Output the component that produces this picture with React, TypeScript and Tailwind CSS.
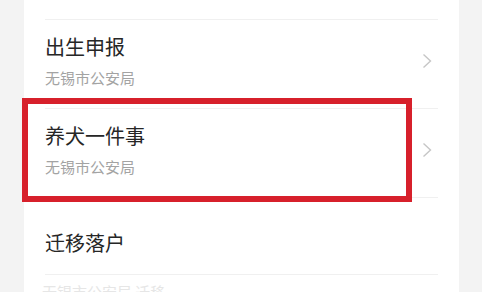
import { Fragment } from 'react'

const FONT = { fontFamily: '"Noto Sans CJK SC", "Noto Sans", sans-serif' }

function Chevron() {
  return (
    <svg width="10" height="16" viewBox="0 0 10 16" className="mb-[6px] shrink-0">
      <polyline points="1.5,1.5 8.5,8 1.5,14.5" fill="none" stroke="#c6c6c6" strokeWidth="1.4" />
    </svg>
  )
}

function Divider() {
  return <div className="mx-[21px] h-px bg-[#f0f0f0]" />
}

interface Item {
  title: string
  sub: string
}

const items: Item[] = [
  { title: '出生申报', sub: '无锡市公安局' },
  { title: '养犬一件事', sub: '无锡市公安局' },
]

export default function App() {
  return (
    <div className="h-[292px] w-[482px] overflow-hidden bg-[#f3f3f3]" style={FONT}>
      <div className="relative ml-[24px] h-full w-[435px] bg-white">
        <div className="h-[19px]" />
        <Divider />
        {items.map((it) => (
          <Fragment key={it.title}>
            <div className="flex items-center pl-[21px] pr-[27px]">
              <div className="flex-1 pt-[13px] pb-[20px]">
                <p className="text-[20px] leading-[28px] text-[#262626]">{it.title}</p>
                <p className="mt-[7px] text-[15px] leading-[20px] text-[#a3a3a3]">{it.sub}</p>
              </div>
              <Chevron />
            </div>
            <Divider />
          </Fragment>
        ))}
        <div className="pl-[21px] pt-[31px] pb-[17px]">
          <p className="text-[20px] leading-[28px] text-[#262626]">迁移落户</p>
        </div>
        <Divider />
        <div className="pl-[18px] pt-[7px]">
          <p className="text-[15px] leading-[20px] text-[#e6e6e6]">无锡市公安局 迁移</p>
        </div>

        {/* red annotation box */}
        <div className="absolute left-[-2px] top-[98px] h-[104px] w-[390px] border-[6px] border-[#d7202b]" />
      </div>
    </div>
  )
}
